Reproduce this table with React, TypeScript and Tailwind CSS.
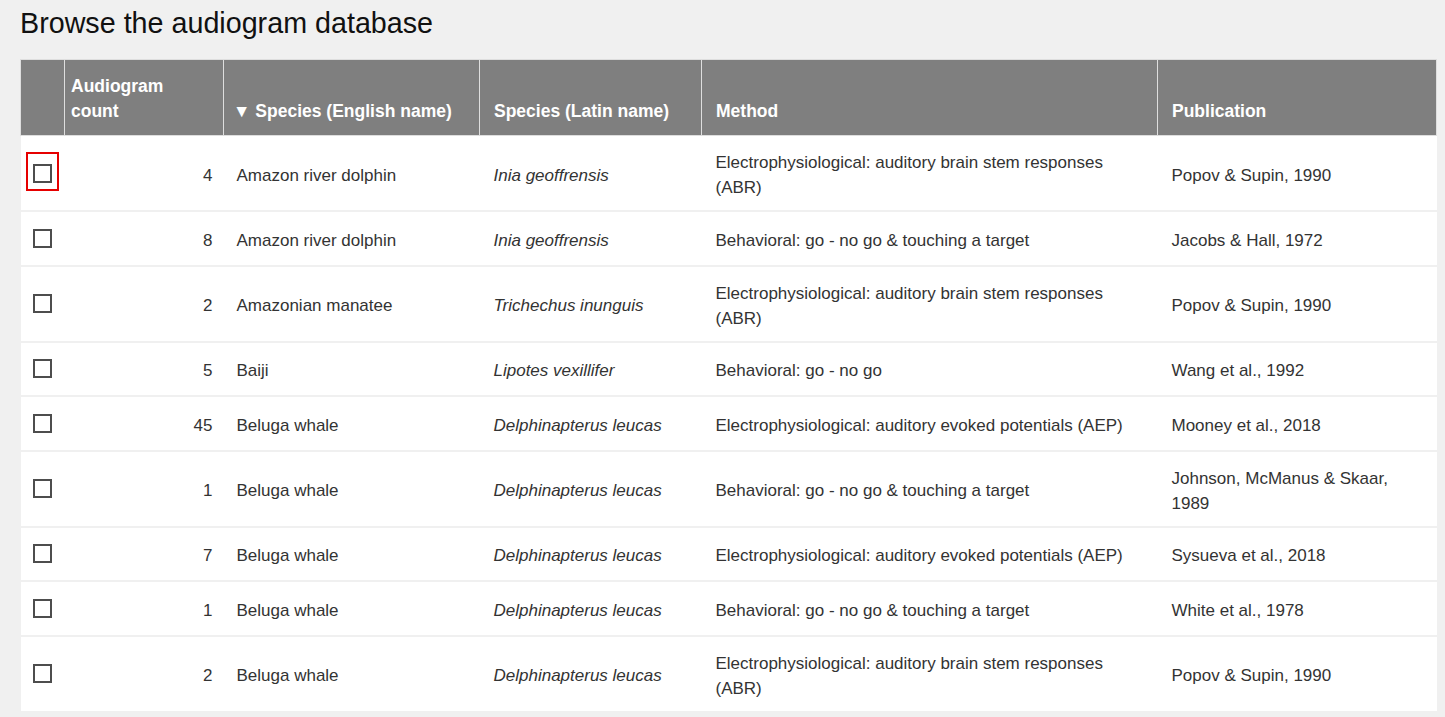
import React from "react";

type Row = {
  count: number;
  en: string;
  la: string;
  method: React.ReactNode;
  pub: React.ReactNode;
  focus?: boolean;
};

const abr = (<>Electrophysiological: auditory brain stem responses<br />(ABR)</>);

const rows: Row[] = [
  { count: 4, en: "Amazon river dolphin", la: "Inia geoffrensis", method: abr, pub: "Popov & Supin, 1990", focus: true },
  { count: 8, en: "Amazon river dolphin", la: "Inia geoffrensis", method: "Behavioral: go - no go & touching a target", pub: "Jacobs & Hall, 1972" },
  { count: 2, en: "Amazonian manatee", la: "Trichechus inunguis", method: abr, pub: "Popov & Supin, 1990" },
  { count: 5, en: "Baiji", la: "Lipotes vexillifer", method: "Behavioral: go - no go", pub: "Wang et al., 1992" },
  { count: 45, en: "Beluga whale", la: "Delphinapterus leucas", method: "Electrophysiological: auditory evoked potentials (AEP)", pub: "Mooney et al., 2018" },
  { count: 1, en: "Beluga whale", la: "Delphinapterus leucas", method: "Behavioral: go - no go & touching a target", pub: (<>Johnson, McManus &amp; Skaar,<br />1989</>) },
  { count: 7, en: "Beluga whale", la: "Delphinapterus leucas", method: "Electrophysiological: auditory evoked potentials (AEP)", pub: "Sysueva et al., 2018" },
  { count: 1, en: "Beluga whale", la: "Delphinapterus leucas", method: "Behavioral: go - no go & touching a target", pub: "White et al., 1978" },
  { count: 2, en: "Beluga whale", la: "Delphinapterus leucas", method: abr, pub: "Popov & Supin, 1990" },
];

const th = "border border-[#dedede] align-bottom pb-[11px] pt-[14px] text-left font-bold";
const td = "pt-[14px] pb-[10px] align-middle";

export default function App() {
  return (
    <div
      className="min-h-[717px] w-full bg-[#f0f0f0] pl-[20px] pt-[7px]"
      style={{ fontFamily: '"Liberation Sans", Arial, sans-serif' }}
    >
      <h1 className="text-[28.7px] leading-[32px] text-[#111] font-normal">
        Browse the audiogram database
      </h1>
      <table className="mt-[20px] w-[1416px] table-fixed border-collapse text-[17px] leading-[25px]">
        <colgroup>
          <col className="w-[44px]" />
          <col className="w-[159px]" />
          <col className="w-[256px]" />
          <col className="w-[222px]" />
          <col className="w-[456px]" />
          <col className="w-[279px]" />
        </colgroup>
        <thead>
          <tr className="bg-[#7f7f7f] text-white text-[17.5px]">
            <th className={th}></th>
            <th className={`${th} pl-[6px]`}>
              Audiogram<br />count
            </th>
            <th className={`${th} pl-[9px] whitespace-nowrap`}>
              <span className="mr-[5px]">▼</span>Species (English name)
            </th>
            <th className={`${th} pl-[14px]`}>Species (Latin name)</th>
            <th className={`${th} pl-[14px]`}>Method</th>
            <th className={`${th} pl-[14px]`}>Publication</th>
          </tr>
        </thead>
        <tbody className="bg-white text-[#333]">
          {rows.map((r, i) => (
            <tr key={i} className="border-b-2 border-[#f0f0f0]">
              <td className="py-[12px] pl-[12px] align-middle">
                <div className="relative flex h-[28.5px] items-center">
                  <span className="block h-[19px] w-[19px] border-2 border-[#4d4d4d] bg-white" />
                  {r.focus && (
                    <span className="absolute left-[-7px] top-[-7px] h-[39px] w-[33px] border-2 border-[#e60000]" />
                  )}
                </div>
              </td>
              <td className={`${td} pr-[11px] text-right`}>{r.count}</td>
              <td className={`${td} pl-[13px] whitespace-nowrap`}>{r.en}</td>
              <td className={`${td} pl-[14px] italic whitespace-nowrap`}>{r.la}</td>
              <td className={`${td} pl-[14px] pr-[10px]`}>{r.method}</td>
              <td className={`${td} pl-[14px] pr-[10px]`}>{r.pub}</td>
            </tr>
          ))}
        </tbody>
      </table>
    </div>
  );
}
